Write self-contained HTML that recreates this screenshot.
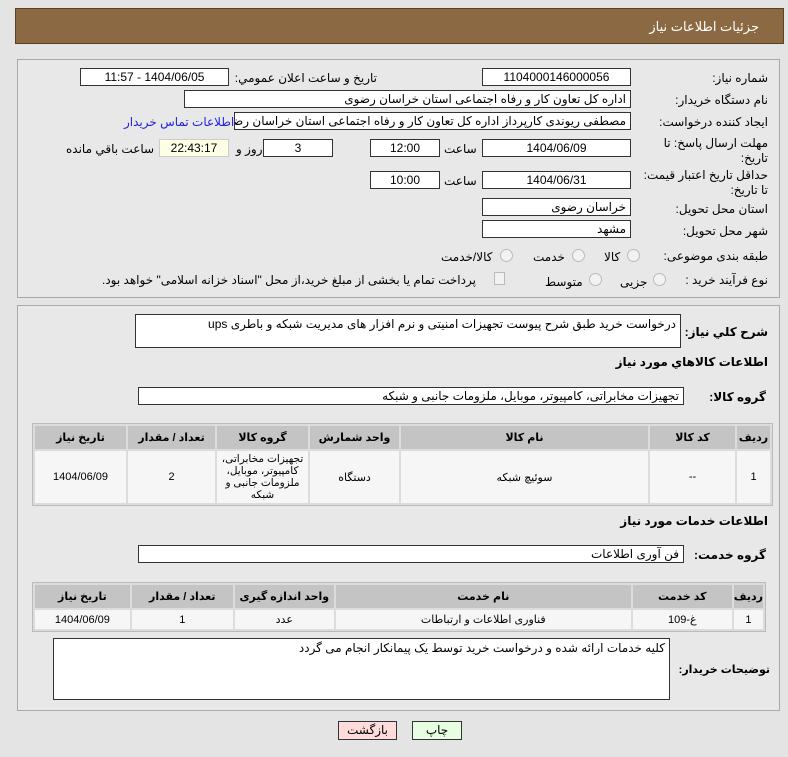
<!DOCTYPE html>
<html><head><meta charset="utf-8"><style>
*{box-sizing:border-box;margin:0;padding:0}
body{width:788px;height:757px;background:#e4e4e4;font-family:"Liberation Sans","DejaVu Sans",sans-serif;font-size:12px;color:#000;position:relative;overflow:hidden;direction:rtl}
.a{position:absolute;white-space:nowrap}
.hd{position:absolute;left:15px;top:8px;width:769px;height:36px;background:#8b6a43;border:1px solid #5a4228;color:#fff;font-size:13px}
.pn{position:absolute;left:17px;width:763px;border:1px solid #a8a8a8;background:#e8e8e8}
.in{position:absolute;background:#fff;border:1px solid #333;height:18px;line-height:16px;padding:0 4px;font-size:12px;white-space:nowrap;overflow:hidden}
.c{text-align:center}
.lb{position:absolute;white-space:nowrap;text-align:right;z-index:2}
.b{font-weight:bold;font-size:12px}
table{position:absolute;border-collapse:separate;border-spacing:2px;background:#dcdcdc;border:1px solid #bbb}
th{background:#c4c4c4;font-weight:bold;height:23px;font-size:11px}
td{background:#f6f6f6;text-align:center;font-size:11px}
.rd{position:absolute;width:13px;height:13px;border-radius:50%;border:1px solid #bbb;background:#f2f2f2}
.btn{position:absolute;height:19px;border:1px solid #333;text-align:center;line-height:17px;font-size:12px}
</style></head><body>
<div class="hd"><span class="a" style="right:24px;top:10px">جزئیات اطلاعات نیاز</span></div>

<div class="pn" style="top:59px;height:239px"></div>
<span class="lb" style="right:20px;top:71px">شماره نیاز:</span>
<div class="in c" style="left:482px;top:68px;width:149px">1104000146000056</div>
<span class="lb" style="right:411px;top:71px">تاریخ و ساعت اعلان عمومي:</span>
<div class="in c" style="left:80px;top:68px;width:149px">1404/06/05 - 11:57</div>

<span class="lb" style="right:20px;top:93px">نام دستگاه خریدار:</span>
<div class="in" style="left:184px;top:90px;width:447px;text-align:right">اداره کل تعاون  کار و رفاه اجتماعی استان خراسان رضوی</div>

<span class="lb" style="right:20px;top:115px">ایجاد کننده درخواست:</span>
<div class="in" style="left:234px;top:112px;width:397px;text-align:right">مصطفی  ریوندی کارپرداز اداره کل تعاون  کار و رفاه اجتماعی استان خراسان رضوی</div>
<span class="a" style="left:124px;top:115px;color:#2222dd">اطلاعات تماس خریدار</span>

<span class="lb" style="right:20px;top:136px;line-height:15px">مهلت ارسال پاسخ: تا<br>تاریخ:</span>
<div class="in c" style="left:482px;top:139px;width:149px">1404/06/09</div>
<span class="a" style="left:444px;top:142px">ساعت</span>
<div class="in c" style="left:370px;top:139px;width:70px">12:00</div>
<div class="in c" style="left:263px;top:139px;width:70px">3</div>
<span class="a" style="left:236px;top:142px">روز و</span>
<div class="in c" style="left:159px;top:139px;width:70px;background:#ffffe6;border-color:#ccc">22:43:17</div>
<span class="a" style="left:66px;top:142px">ساعت باقي مانده</span>

<span class="lb" style="right:20px;top:168px;line-height:15px">حداقل تاریخ اعتبار قیمت:<br>تا تاریخ:</span>
<div class="in c" style="left:482px;top:171px;width:149px">1404/06/31</div>
<span class="a" style="left:444px;top:174px">ساعت</span>
<div class="in c" style="left:370px;top:171px;width:70px">10:00</div>

<span class="lb" style="right:20px;top:202px">استان محل تحویل:</span>
<div class="in" style="left:482px;top:198px;width:149px;text-align:right">خراسان رضوی</div>
<span class="lb" style="right:20px;top:224px">شهر محل تحویل:</span>
<div class="in" style="left:482px;top:220px;width:149px;text-align:right">مشهد</div>

<span class="lb" style="right:20px;top:249px">طبقه بندی موضوعی:</span>
<div class="rd" style="left:627px;top:249px"></div><span class="a" style="left:604px;top:250px">کالا</span>
<div class="rd" style="left:572px;top:249px"></div><span class="a" style="left:533px;top:250px">خدمت</span>
<div class="rd" style="left:500px;top:249px"></div><span class="a" style="left:441px;top:250px">کالا/خدمت</span>

<span class="lb" style="right:20px;top:273px">نوع فرآیند خرید :</span>
<div class="rd" style="left:653px;top:273px"></div><span class="a" style="left:620px;top:275px">جزیی</span>
<div class="rd" style="left:589px;top:273px"></div><span class="a" style="left:545px;top:275px">متوسط</span>
<div class="a" style="left:494px;top:272px;width:11px;height:13px;border:1px solid #bbb;background:#f2f2f2"></div>
<span class="a" style="left:102px;top:273px">پرداخت تمام یا بخشی از مبلغ خرید،از محل "اسناد خزانه اسلامی" خواهد بود.</span>

<div class="pn" style="top:305px;height:406px"></div>
<span class="lb b" style="right:20px;top:325px">شرح کلي نیاز:</span>
<div class="in" style="left:135px;top:314px;width:546px;height:34px;text-align:right;line-height:18px">درخواست خرید طبق شرح پیوست تجهیزات امنیتی و نرم افزار های مدیریت شبکه و باطری  ups</div>
<span class="lb b" style="right:20px;top:355px">اطلاعات کالاهاي مورد نیاز</span>
<span class="lb b" style="right:22px;top:390px">گروه کالا:</span>
<div class="in" style="left:138px;top:387px;width:546px;text-align:right">تجهیزات مخابراتی، کامپیوتر، موبایل، ملزومات جانبی و شبکه</div>

<table style="left:32px;top:423px;width:741px;height:83px">
<tr><th style="width:33px">ردیف</th><th style="width:85px">کد کالا</th><th style="width:247px">نام کالا</th><th style="width:89px">واحد شمارش</th><th style="width:91px">گروه کالا</th><th style="width:87px">تعداد / مقدار</th><th>تاریخ نیاز</th></tr>
<tr><td>1</td><td>--</td><td>سوئیچ شبکه</td><td>دستگاه</td><td style="line-height:12px;font-size:10.5px">تجهیزات مخابراتی، کامپیوتر، موبایل، ملزومات جانبی و شبکه</td><td>2</td><td>1404/06/09</td></tr>
</table>

<span class="lb b" style="right:20px;top:514px">اطلاعات خدمات مورد نیاز</span>
<span class="lb b" style="right:22px;top:548px">گروه خدمت:</span>
<div class="in" style="left:138px;top:545px;width:546px;text-align:right">فن آوری اطلاعات</div>

<table style="left:32px;top:582px;width:734px;height:50px">
<tr><th style="width:27px">ردیف</th><th style="width:99px">کد خدمت</th><th style="width:295px">نام خدمت</th><th style="width:99px">واحد اندازه گیری</th><th style="width:101px">تعداد / مقدار</th><th>تاریخ نیاز</th></tr>
<tr><td>1</td><td>غ-109</td><td>فناوری اطلاعات و ارتباطات</td><td>عدد</td><td>1</td><td>1404/06/09</td></tr>
</table>

<span class="lb b" style="right:18px;top:663px;font-size:11px">توضیحات خریدار:</span>
<div class="in" style="left:53px;top:638px;width:617px;height:62px;text-align:right;line-height:18px">کلیه خدمات ارائه شده و درخواست خرید توسط یک پیمانکار انجام می گردد</div>

<div class="btn" style="left:338px;top:721px;width:59px;background:#ffdcdc">بازگشت</div>
<div class="btn" style="left:412px;top:721px;width:50px;background:#e6ffe0">چاپ</div>
</body></html>
